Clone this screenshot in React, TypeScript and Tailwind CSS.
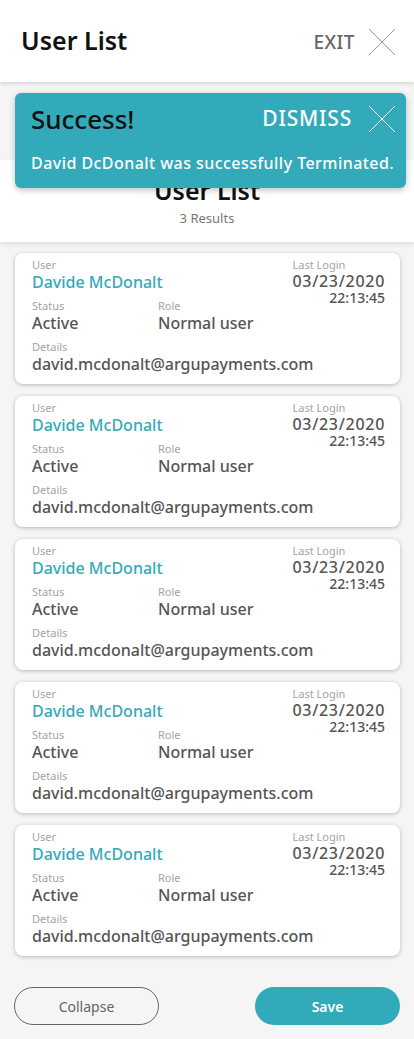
const users = Array.from({ length: 5 }, () => ({
  name: "Davide McDonalt",
  date: "03/23/2020",
  time: "22:13:45",
  status: "Active",
  role: "Normal user",
  email: "david.mcdonalt@argupayments.com",
}));

const font = { fontFamily: '"Noto Sans", "Open Sans", sans-serif' };

function CloseIcon({ className }: { className?: string }) {
  return (
    <svg viewBox="0 0 28 28" className={className} fill="none" stroke="currentColor" strokeWidth={1}>
      <path d="M1 1L27 27M27 1L1 27" />
    </svg>
  );
}

function Label({ children }: { children: React.ReactNode }) {
  return <div className="text-[11px] leading-[14px] text-[#a3a3a3]">{children}</div>;
}

function UserCard({ user }: { user: (typeof users)[number] }) {
  return (
    <div className="ml-[15px] mr-[14px] rounded-lg bg-white pl-[17px] pr-[15px] pt-[5px] pb-[10px] shadow-[0_1px_4px_rgba(0,0,0,0.25)]">
      <div className="flex justify-between">
        <div>
          <Label>User</Label>
          <div className="text-[16px] leading-[20px] font-medium text-[#33aab9]">{user.name}</div>
        </div>
        <div className="flex h-[41px] flex-col">
          <Label>Last Login</Label>
          <div className="text-[16px] leading-[18px] font-medium tracking-[0.7px] text-[#555]">{user.date}</div>
          <div className="text-right text-[14px] leading-[15px] font-medium text-[#555]">{user.time}</div>
        </div>
      </div>
      <div className="flex">
        <div className="w-[126px]">
          <Label>Status</Label>
          <div className="text-[16px] leading-[20px] font-medium text-[#555]">{user.status}</div>
        </div>
        <div>
          <Label>Role</Label>
          <div className="text-[16px] leading-[20px] font-medium text-[#555]">{user.role}</div>
        </div>
      </div>
      <div className="mt-[7px]">
        <Label>Details</Label>
        <div className="text-[16px] leading-[20px] font-medium text-[#555]">{user.email}</div>
      </div>
    </div>
  );
}

export default function App() {
  return (
    <div style={font} className="relative min-h-[1039px] w-[414px] bg-[#f5f5f5]">
      <header className="relative z-10 flex h-[82px] items-center justify-between bg-white pl-[21px] pr-[18px] shadow-[0_2px_4px_rgba(0,0,0,0.12)]">
        <h1 className="text-[25px] font-semibold text-[#111]">User List</h1>
        <div className="flex items-center gap-[13px] pt-[2px]">
          <span className="text-[19px] font-medium tracking-[0.5px] text-[#666]">EXIT</span>
          <CloseIcon className="h-[28px] w-[28px] text-[#999]" />
        </div>
      </header>

      <div className="h-[78px]" />

      <section className="flex h-[82px] flex-col items-center bg-white pt-[14px] shadow-[0_2px_4px_rgba(0,0,0,0.1)]">
        <h2 className="text-[25px] font-semibold leading-[32px] text-[#111]">User List</h2>
        <p className="mt-[3px] text-[13px] text-[#777]">3 Results</p>
      </section>

      <div className="absolute left-[15px] top-[93px] z-20 w-[391px] rounded-md bg-[#33aab9] pl-[16px] pr-[10px] pt-[10px] pb-[14px] shadow-[0_2px_6px_rgba(0,0,0,0.25)]">
        <div className="flex items-center justify-between">
          <span className="text-[26px] font-medium leading-[30px] text-[#111]">Success!</span>
          <div className="flex items-center gap-[16px]">
            <span className="text-[21px] font-medium tracking-[0.8px] text-white">DISMISS</span>
            <CloseIcon className="h-[28px] w-[28px] text-white" />
          </div>
        </div>
        <p className="mt-[17px] whitespace-nowrap text-[16px] font-medium leading-[22px] tracking-[0.45px] text-white">
          David DcDonalt was successfully Terminated.
        </p>
      </div>

      <div className="mt-[11px] flex flex-col gap-[12px]">
        {users.map((u, i) => (
          <UserCard key={i} user={u} />
        ))}
      </div>

      <div className="mt-[31px] flex justify-between pl-[14px] pr-[14px]">
        <button className="h-[38px] w-[145px] rounded-full border border-[#666] text-[14px] text-[#666]">Collapse</button>
        <button className="h-[38px] w-[145px] rounded-full bg-[#33aab9] text-[14px] font-semibold text-white">Save</button>
      </div>
    </div>
  );
}
